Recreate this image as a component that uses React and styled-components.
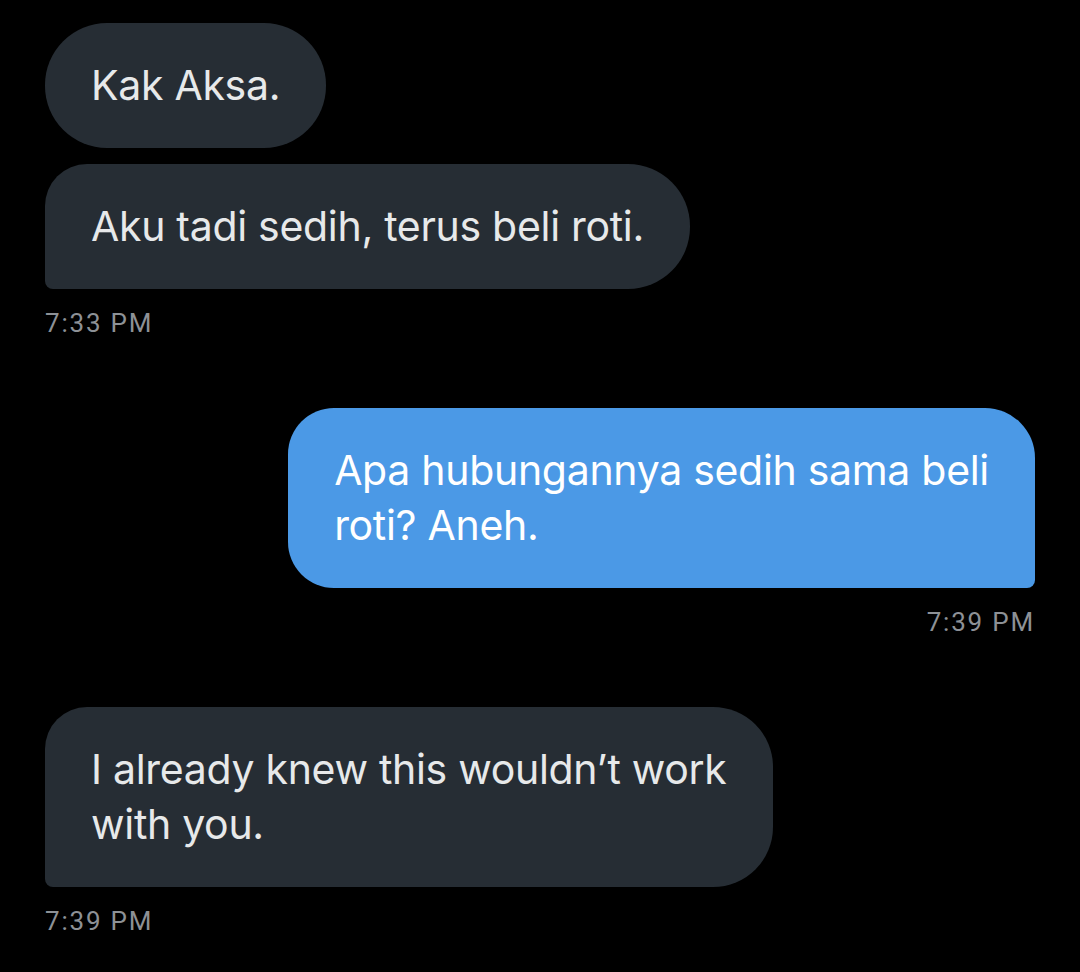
import React from "react";
import styled, { createGlobalStyle } from "styled-components";

const GlobalStyle = createGlobalStyle`
  html, body {
    margin: 0;
    padding: 0;
    background: #000000;
  }
  body {
    font-family: Inter, "Noto Sans", sans-serif;
  }
`;

const Thread = styled.div`
  display: flex;
  flex-direction: column;
  width: 1080px;
  min-height: 972px;
  box-sizing: border-box;
  padding: 23px 45px 0 45px;
  background: #000000;
`;

const Group = styled.div`
  display: flex;
  flex-direction: column;
  align-items: ${(p) => (p.$mine ? "flex-end" : "flex-start")};
  gap: 16px;
  margin-top: ${(p) => (p.$first ? "0" : "70px")};
`;

const Bubble = styled.div`
  width: fit-content;
  box-sizing: border-box;
  padding: 35px 46px 35px 46px;
  font-size: 41px;
  line-height: 55px;
  letter-spacing: -0.3px;
  color: ${(p) => (p.$mine ? "#ffffff" : "#e7e9ea")};
  background: ${(p) => (p.$mine ? "#4b99e6" : "#262d34")};
  border-radius: ${(p) => p.$radius};
  white-space: nowrap;
`;

const Time = styled.div`
  margin-top: 3px;
  font-family: Roboto, "Liberation Sans", sans-serif;
  font-size: 26px;
  line-height: 30px;
  letter-spacing: 1.8px;
  color: #8d9196;
`;

export default function App() {
  return (
    <>
      <GlobalStyle />
      <Thread>
        <Group $first>
          <Bubble $radius="62px">Kak Aksa.</Bubble>
          <Bubble $radius="42px 62px 62px 8px">
            Aku tadi sedih, terus beli roti.
          </Bubble>
          <Time>7:33 PM</Time>
        </Group>
        <Group $mine>
          <Bubble $mine $radius="46px 50px 8px 46px">
            Apa hubungannya sedih sama beli
            <br />
            roti? Aneh.
          </Bubble>
          <Time>7:39 PM</Time>
        </Group>
        <Group>
          <Bubble $radius="42px 60px 60px 8px">
            I already knew this wouldn’t work
            <br />
            with you.
          </Bubble>
          <Time>7:39 PM</Time>
        </Group>
      </Thread>
    </>
  );
}
